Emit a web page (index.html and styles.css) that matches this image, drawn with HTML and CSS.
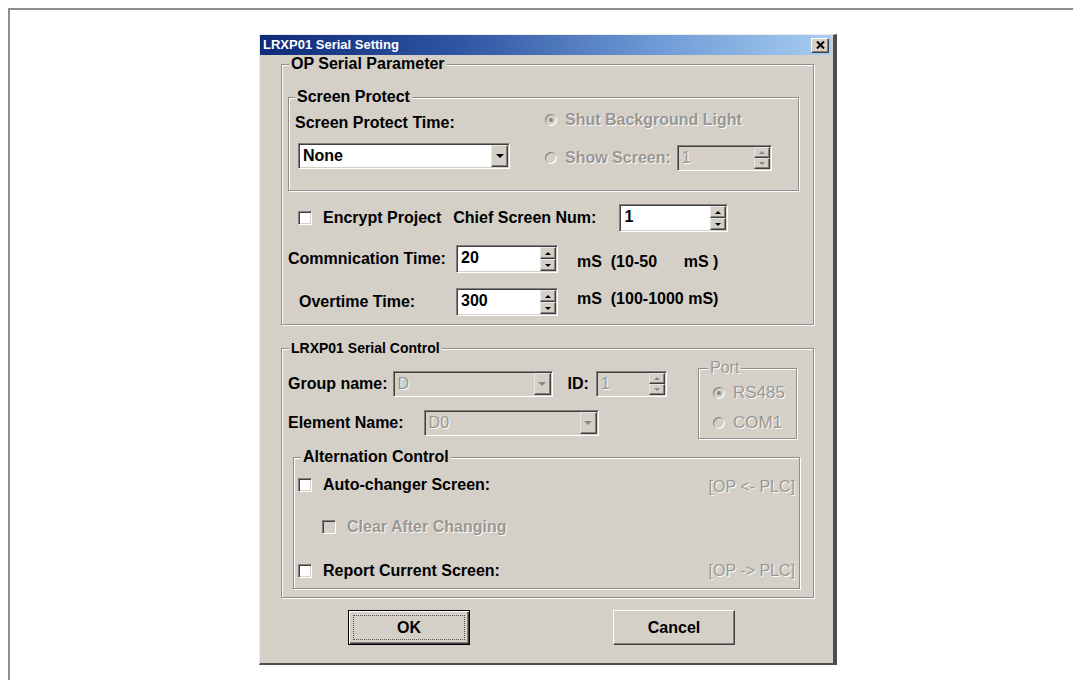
FILE: index.html
```html
<!DOCTYPE html>
<html lang="en">
<head>
<meta charset="utf-8">
<title>LRXP01 Serial Setting</title>
<link rel="stylesheet" href="styles.css">
</head>
<body>
<div class="sheet">
  <div class="dialog">
    <div class="titlebar">
      <span class="title">LRXP01 Serial Setting</span>
      <span class="close">
        <svg width="9" height="8" viewBox="0 0 9 8"><path d="M1 0.5 L8 7.5 M8 0.5 L1 7.5" stroke="#000" stroke-width="2"/></svg>
      </span>
    </div>

    <div class="dlg-body">
      <fieldset class="group op">
        <legend>OP Serial Parameter</legend>

        <fieldset class="group sp">
          <legend>Screen Protect</legend>
          <div class="sp-row">
            <div class="sp-left">
              <div class="lbl">Screen Protect Time:</div>
              <div class="combo combo-none">
                <span class="combo-text">None</span>
                <span class="drop"><i class="tri-down"></i></span>
              </div>
            </div>
            <div class="sp-right">
              <div class="radio-line dis"><span class="radio on"></span>Shut Background Light</div>
              <div class="radio-line dis show-line">
                <span class="radio"></span>Show Screen:
                <div class="spin spin-show off">
                  <span class="spin-val">1</span>
                  <span class="spin-btns"><span class="sbtn"><i class="tri-up"></i></span><span class="sbtn"><i class="tri-dn"></i></span></span>
                </div>
              </div>
            </div>
          </div>
        </fieldset>

        <div class="form-row row-encrypt">
          <span class="check"></span>
          <span class="lbl">Encrypt Project</span>
          <span class="lbl chief">Chief Screen Num:</span>
          <div class="spin spin-chief">
            <span class="spin-val">1</span>
            <span class="spin-btns"><span class="sbtn"><i class="tri-up"></i></span><span class="sbtn"><i class="tri-dn"></i></span></span>
          </div>
        </div>

        <div class="form-row row-comm">
          <span class="lbl field-lbl">Commnication Time:</span>
          <div class="spin spin-time">
            <span class="spin-val">20</span>
            <span class="spin-btns"><span class="sbtn"><i class="tri-up"></i></span><span class="sbtn"><i class="tri-dn"></i></span></span>
          </div>
          <span class="range range-comm">mS  (10-50      mS )</span>
        </div>

        <div class="form-row row-over">
          <span class="lbl field-lbl indent">Overtime Time:</span>
          <div class="spin spin-time">
            <span class="spin-val">300</span>
            <span class="spin-btns"><span class="sbtn"><i class="tri-up"></i></span><span class="sbtn"><i class="tri-dn"></i></span></span>
          </div>
          <span class="range range-over">mS  (100-1000 mS)</span>
        </div>
      </fieldset>

      <fieldset class="group sc">
        <legend class="small-legend">LRXP01 Serial Control</legend>

        <div class="sc-top">
          <div class="sc-fields">
            <div class="form-row row-group">
              <span class="lbl">Group name:</span>
              <div class="combo combo-group off">
                <span class="combo-text">D</span>
                <span class="drop"><i class="tri-down"></i></span>
              </div>
              <span class="lbl id-lbl">ID:</span>
              <div class="spin spin-id off">
                <span class="spin-val">1</span>
                <span class="spin-btns"><span class="sbtn"><i class="tri-up"></i></span><span class="sbtn"><i class="tri-dn"></i></span></span>
              </div>
            </div>
            <div class="form-row row-element">
              <span class="lbl">Element Name:</span>
              <div class="combo combo-element off">
                <span class="combo-text">D0</span>
                <span class="drop"><i class="tri-down"></i></span>
              </div>
            </div>
          </div>

          <fieldset class="group port">
            <legend class="dis plain port-legend">Port</legend>
            <div class="radio-line dis plain port-line"><span class="radio on"></span>RS485</div>
            <div class="radio-line dis plain port-line second"><span class="radio"></span>COM1</div>
          </fieldset>
        </div>

        <fieldset class="group alt">
          <legend>Alternation Control</legend>
          <div class="check-row">
            <span class="check"></span>
            <span class="lbl">Auto-changer Screen:</span>
            <span class="dir dis plain">[OP &lt;- PLC]</span>
          </div>
          <div class="check-row sub dis">
            <span class="check off"></span>
            <span class="lbl">Clear After Changing</span>
          </div>
          <div class="check-row last">
            <span class="check"></span>
            <span class="lbl">Report Current Screen:</span>
            <span class="dir dis plain">[OP -&gt; PLC]</span>
          </div>
        </fieldset>
      </fieldset>

      <div class="buttons">
        <button class="btn btn-default" type="button">OK</button>
        <button class="btn" type="button">Cancel</button>
      </div>
    </div>
  </div>
</div>
</body>
</html>
```

FILE: styles.css
```css
* { box-sizing: border-box; }

html, body {
  margin: 0;
  background: #fff;
}

body {
  font-family: "Liberation Sans", Arial, sans-serif;
  font-size: 16px;
  font-weight: bold;
  line-height: 18px;
  color: #000;
}

/* page frame the dialog sits on */
.sheet {
  margin: 8px 0 0 8px;
  height: 672px;
  border-top: 2px solid #8d8d8d;
  border-left: 2px solid #8d8d8d;
  padding: 24px 0 0 249px;
}

/* ---- window ---- */
.dialog {
  width: 578px;
  height: 631px;
  background: #d4d0c8;
  border-style: solid;
  border-width: 1px 4px 2px 1px;
  border-color: #ecebe7 #4e4e4e #4e4e4e #ecebe7;
  display: flex;
  flex-direction: column;
}

.titlebar {
  height: 20px;
  margin-right: 2px;
  padding: 0 2px 0 3px;
  background: linear-gradient(90deg, #0f2a78 0%, #2f56a3 35%, #6f9bd6 70%, #a8cdf1 100%);
  display: flex;
  align-items: center;
  justify-content: space-between;
}

.title {
  color: #fff;
  font-size: 13px;
  font-weight: bold;
  line-height: 16px;
}

.close {
  width: 18px;
  height: 15px;
  background: #d4d0c8;
  border: 1px solid;
  border-color: #fff #404040 #404040 #fff;
  box-shadow: inset -1px -1px 0 #808080;
  display: flex;
  align-items: center;
  justify-content: center;
}

.dlg-body {
  padding: 0 19px 0 21px;
}

/* ---- group boxes (etched frame) ---- */
fieldset {
  margin: 0;
  min-width: 0;
}

.group {
  border: 1px solid #8f8d89;
  box-shadow: 1px 1px 0 #fff, inset 1px 1px 0 #fff;
}

.group > legend {
  padding: 0 2px;
  background: #d4d0c8;
  font-size: 16px;
  line-height: 18px;
}

.op {
  padding: 15px 14px 8px 6px;
}
.op > legend { margin-left: 1px; }

.sp {
  padding: 5px 10px 19px 6px;
}

.sc {
  margin-top: 14px;
  padding: 0 13px 8px 6px;
}
.sc > legend { margin-left: 1px; }
.sc > legend.small-legend { font-size: 14px; }

.alt {
  margin: 9px 0 0 5px;
  padding: 10px 4px 8px 4px;
}
.alt > legend { margin-left: 3px; }

.port {
  width: 99px;
  margin-top: 2px;
  padding: 7px 4px 6px 14px;
}
.port > legend.port-legend {
  margin-left: -5px;
  font-size: 16px;
  font-weight: normal;
}

/* ---- text ---- */
.lbl { white-space: nowrap; }

.dis {
  color: #9a9792;
  text-shadow: 1px 1px 0 #fbfaf8;
}

.plain { font-weight: normal; }

/* ---- screen protect area ---- */
.sp-row {
  display: flex;
  align-items: flex-start;
}

.sp-left {
  width: 215px;
  padding-top: 3px;
  margin-right: 35px;
}

.combo-none {
  margin: 11px 0 0 3px;
  width: 212px;
}

.radio-line {
  display: flex;
  align-items: center;
  height: 18px;
  white-space: nowrap;
}

.show-line {
  margin-top: 16px;
  height: 26px;
}

.radio {
  flex: none;
  width: 12px;
  height: 12px;
  border-radius: 50%;
  margin-right: 8px;
  background: #d4d0c8;
  box-shadow: inset 1px 1px 0 #808080, inset -1px -1px 0 #fff;
  position: relative;
}

.radio.on::after {
  content: "";
  position: absolute;
  left: 4px;
  top: 4px;
  width: 4px;
  height: 4px;
  border-radius: 50%;
  background: #8a8782;
}

/* ---- sunken fields ---- */
.combo,
.spin {
  display: flex;
  align-items: stretch;
  height: 26px;
  background: #fff;
  border: 1px solid;
  border-color: #808080 #fff #fff #808080;
  box-shadow: inset 1px 1px 0 #404040, inset -1px -1px 0 #d4d0c8;
  padding: 1px;
}

.combo.off,
.spin.off {
  background: #d4d0c8;
}

.combo.off .combo-text,
.spin.off .spin-val {
  color: #9a9792;
  font-weight: normal;
  text-shadow: 1px 1px 0 #fbfaf8;
}

.combo-text,
.spin-val {
  flex: 1;
  padding: 2px 0 0 3px;
}

.drop {
  width: 17px;
  background: #d4d0c8;
  border: 1px solid;
  border-color: #e8e6e1 #404040 #404040 #e8e6e1;
  box-shadow: inset -1px -1px 0 #808080;
  display: flex;
  align-items: center;
  justify-content: center;
}

.tri-down {
  width: 0;
  height: 0;
  border-left: 4px solid transparent;
  border-right: 4px solid transparent;
  border-top: 4px solid #000;
}

.off .tri-down { border-top-color: #8a8782; }

.spin-btns {
  width: 16px;
  display: flex;
  flex-direction: column;
}

.sbtn {
  flex: 1;
  background: #d4d0c8;
  border: 1px solid;
  border-color: #e8e6e1 #404040 #404040 #e8e6e1;
  box-shadow: inset -1px -1px 0 #808080;
  display: flex;
  align-items: center;
  justify-content: center;
}

.tri-up,
.tri-dn {
  width: 0;
  height: 0;
  border-left: 3px solid transparent;
  border-right: 3px solid transparent;
}
.tri-up { border-bottom: 3px solid #000; }
.tri-dn { border-top: 3px solid #000; }
.off .tri-up { border-bottom-color: #8a8782; }
.off .tri-dn { border-top-color: #8a8782; }

.spin-show { width: 95px; margin-left: 6px; }

/* ---- parameter rows ---- */
.form-row {
  display: flex;
  align-items: center;
  height: 28px;
}

.row-encrypt { margin-top: 13px; padding-left: 10px; }
.row-comm { margin-top: 13px; }
.row-over { margin-top: 15px; }

.row-encrypt .chief { margin-left: 12px; }
.spin-chief { width: 109px; margin-left: 23px; height: 28px; }

.field-lbl { width: 168px; }
.field-lbl.indent { padding-left: 11px; }

.spin-time { width: 102px; height: 28px; }

.range {
  margin-left: 19px;
  white-space: pre;
}
.range-comm { padding-top: 6px; }
.range-over { padding-bottom: 6px; }

/* ---- checkboxes ---- */
.check {
  flex: none;
  width: 14px;
  height: 14px;
  margin-right: 11px;
  background: #fff;
  border: 1px solid;
  border-color: #808080 #fff #fff #808080;
  box-shadow: inset 1px 1px 0 #404040, inset -1px -1px 0 #d4d0c8;
}

.check.off { background: #d4d0c8; }

/* ---- serial control ---- */
.sc-top {
  display: flex;
  align-items: flex-start;
}

.sc-fields {
  width: 410px;
  margin-top: 13px;
}

.row-element { margin-top: 11px; }

.combo-group { width: 160px; margin-left: 5px; }
.id-lbl { margin-left: 15px; }
.spin-id { width: 71px; margin-left: 7px; }
.combo-element { width: 175px; margin-left: 20px; }

.port-line {
  font-size: 17px;
}
.port-line .radio { margin-right: 8px; }
.port-line.second { margin-top: 12px; }

.check-row {
  display: flex;
  align-items: center;
  height: 18px;
}

.check-row.sub {
  margin-top: 24px;
  padding-left: 24px;
}

.check-row.last { margin-top: 26px; }

.dir {
  margin-left: auto;
  padding-top: 4px;
}
.check-row.last .dir { padding-top: 0; }

/* ---- command buttons ---- */
.buttons {
  display: flex;
  gap: 143px;
  margin: 12px 0 0 67px;
}

.btn {
  width: 122px;
  height: 35px;
  padding: 0;
  font: inherit;
  color: #000;
  background: #d4d0c8;
  border: 1px solid;
  border-color: #fff #404040 #404040 #fff;
  box-shadow: inset -1px -1px 0 #808080;
  position: relative;
}

.btn-default {
  border: 1px solid #000;
  box-shadow: inset 1px 1px 0 #fff, inset -1px -1px 0 #404040, inset -2px -2px 0 #808080;
}

/* focus rectangle on the default button */
.btn-default::after {
  content: "";
  position: absolute;
  inset: 4px;
  border: 1px dotted #555;
}
```
